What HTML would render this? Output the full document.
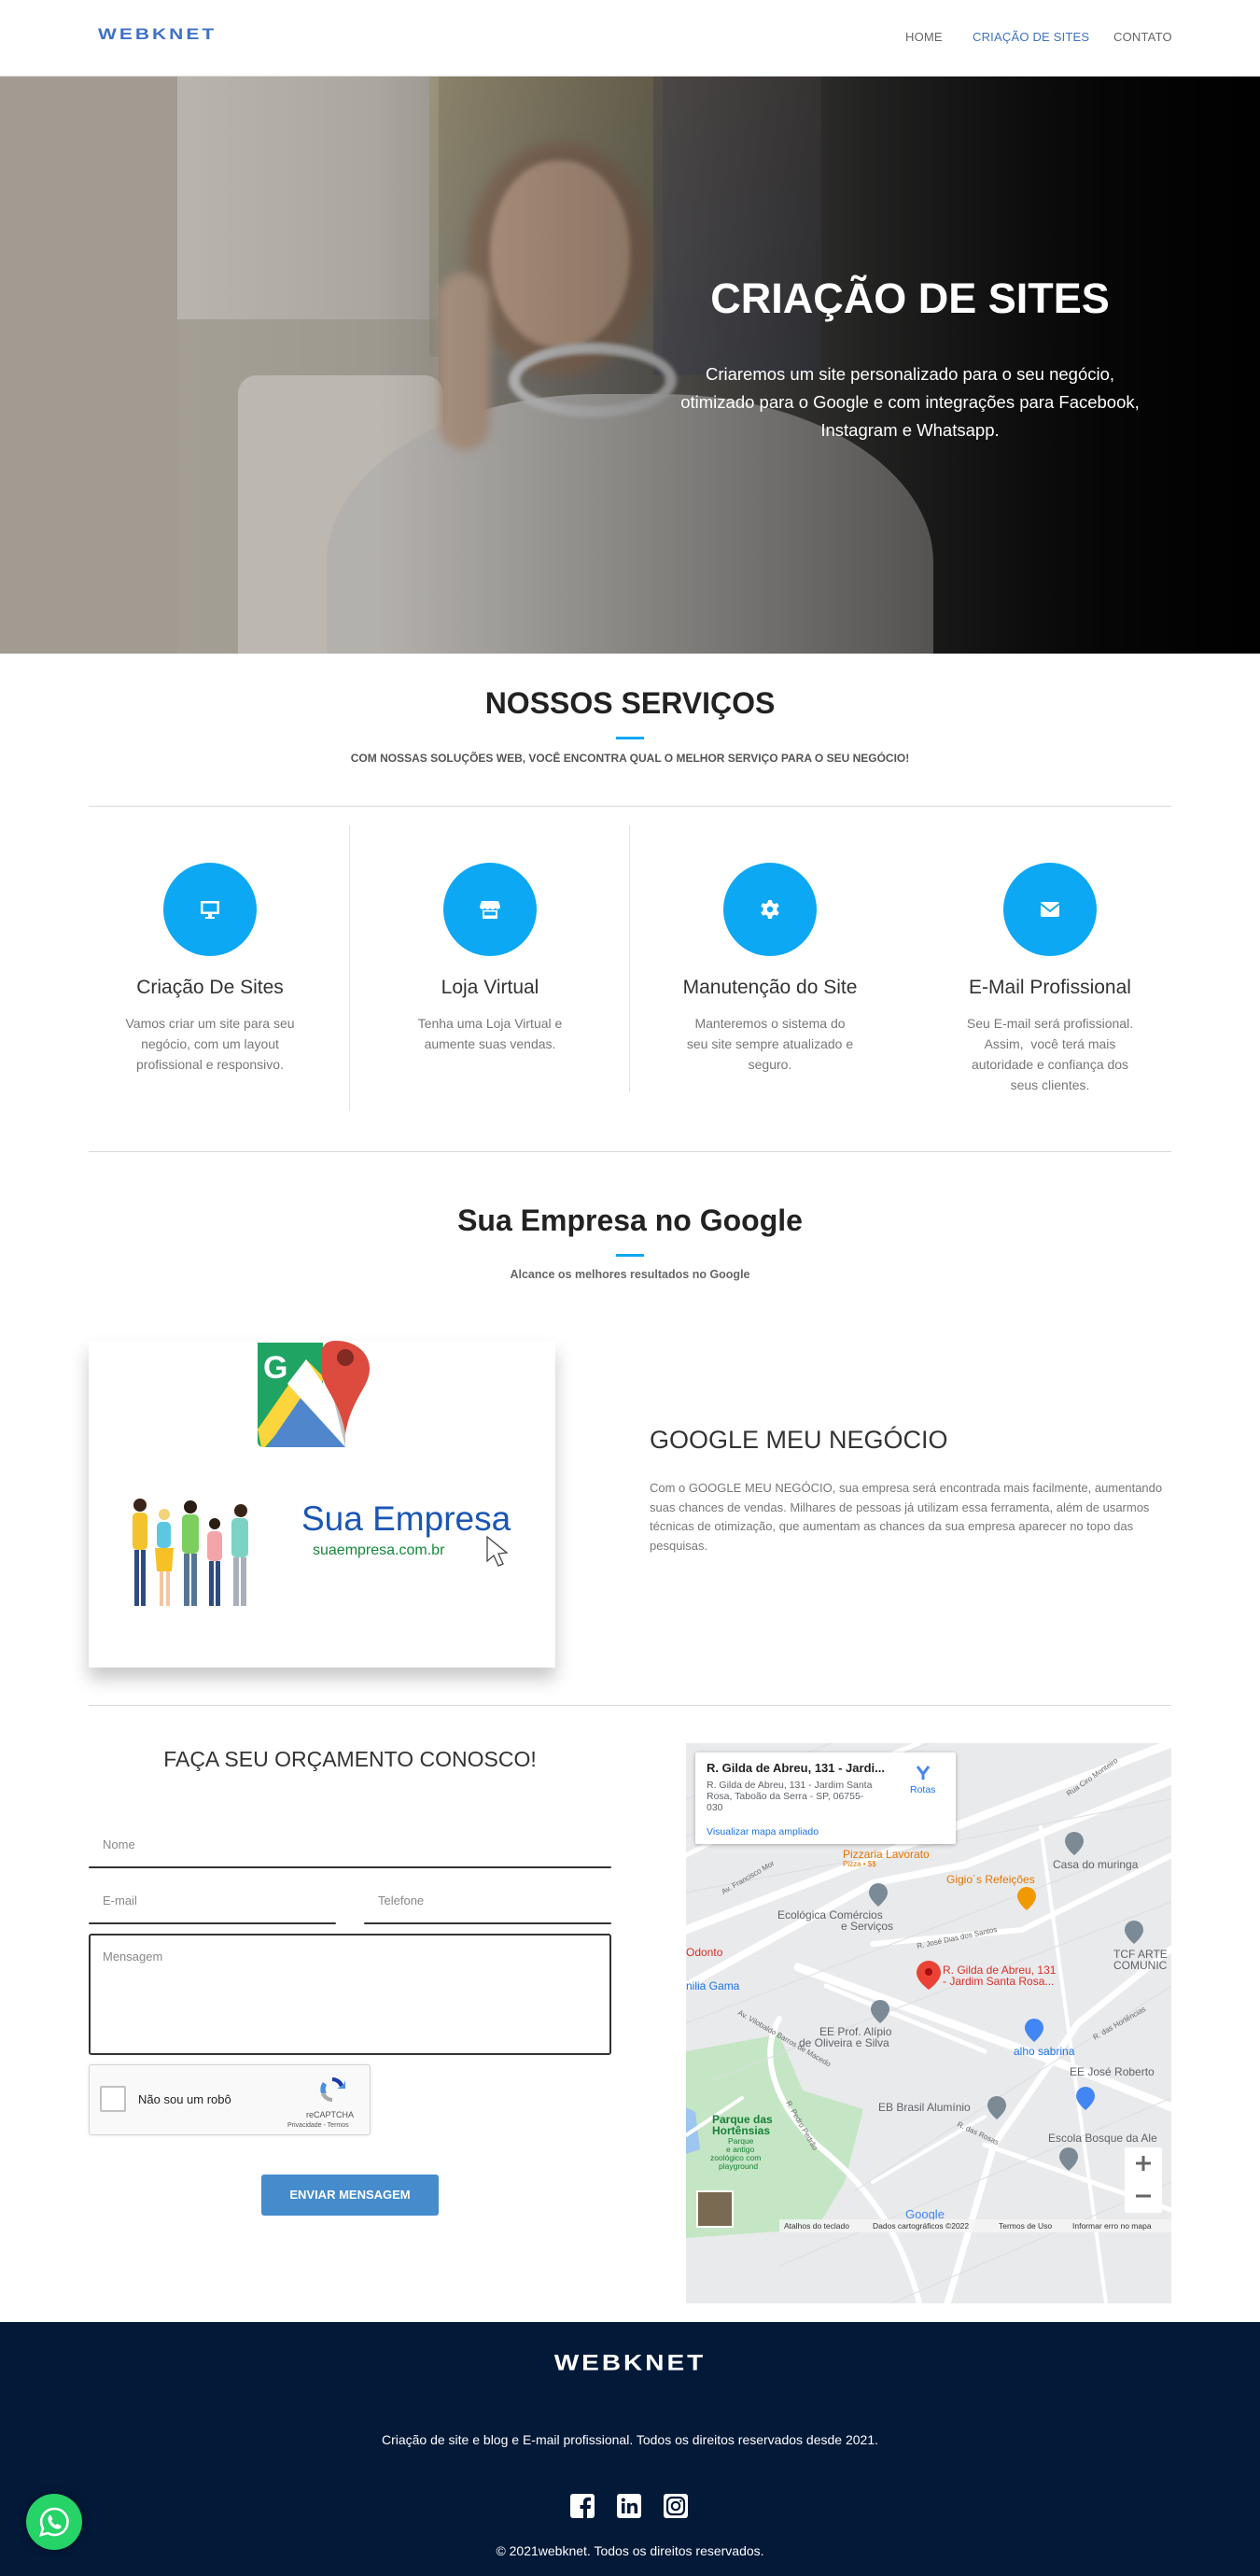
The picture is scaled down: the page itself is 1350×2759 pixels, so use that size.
<!DOCTYPE html>
<html><head><meta charset="utf-8">
<style>
*{margin:0;padding:0;box-sizing:border-box}
body{width:1350px;height:2759px;font-family:"Liberation Sans",sans-serif;background:#fff;position:relative;overflow:hidden;color:#666}
.abs{position:absolute}
.c{text-align:center}
.hr{position:absolute;left:95px;width:1160px;height:1px;background:#d9d9d9}
.nav a{position:absolute;top:32px;font-size:13px;color:#666;text-decoration:none;letter-spacing:.2px}
.circle{position:absolute;width:100px;height:100px;border-radius:50%;background:#0ca8f3;top:924px}
.circle svg{position:absolute;left:38px;top:38px}
.st{position:absolute;top:1046px;width:260px;text-align:center;font-size:21px;color:#333}
.sd{position:absolute;top:1085px;width:220px;text-align:center;font-size:14px;line-height:22px;color:#777}
.fld{position:absolute;font-size:13px;color:#888}
.line{position:absolute;height:2px;background:#333;border-radius:2px}
</style></head><body>

<!-- header -->
<div class="abs" style="left:0;top:0;width:1350px;height:82px;background:#fff;border-bottom:1px solid #ddd"></div>
<div class="abs" style="left:105px;top:25px;font-size:21px;font-weight:900;letter-spacing:3px;color:#3f72c4;transform:scaleY(.8)">WEBKNET</div>
<div class="nav">
<a style="left:970px">HOME</a>
<a style="left:1042px;color:#3f72c4">CRIAÇÃO DE SITES</a>
<a style="left:1193px">CONTATO</a>
</div>

<!-- hero -->
<div class="abs" style="left:0;top:82px;width:1350px;height:618px;overflow:hidden;background:linear-gradient(90deg,#9b958c 0%,#a59f95 15%,#8e8980 35%,#6a6762 55%,#3c3c3b 72%,#151515 88%,#050505 100%)">
  <div class="abs" style="left:0;top:0;width:190px;height:618px;background:#aaa39a"></div>
  <div class="abs" style="left:190px;top:0;width:280px;height:260px;background:linear-gradient(90deg,#cfcbc4,#bdb8b0);opacity:.7"></div>
  <div class="abs" style="left:190px;top:260px;width:280px;height:358px;background:#b3ada4;opacity:.6"></div>
  <div class="abs" style="left:460px;top:0;width:250px;height:300px;background:linear-gradient(180deg,#a79a6a,#8c8a7a);opacity:.5"></div>
  <div class="abs" style="left:700px;top:0;width:180px;height:320px;background:linear-gradient(180deg,#6b6464,#55596a);opacity:.6"></div>
  <div class="abs" style="left:255px;top:320px;width:220px;height:300px;border-radius:20px 20px 0 0;background:#c6c1ba"></div>
  <div class="abs" style="left:350px;top:340px;width:650px;height:400px;border-radius:45% 45% 0 0;background:#bdbab6"></div>
  <div class="abs" style="left:500px;top:70px;width:200px;height:250px;border-radius:50%;background:#8e7460;filter:blur(6px)"></div>
  <div class="abs" style="left:525px;top:90px;width:150px;height:200px;border-radius:48%;background:#c2a38c;filter:blur(3px)"></div>
  <div class="abs" style="left:545px;top:285px;width:180px;height:80px;border-radius:50%;border:12px solid #d0d0d0;filter:blur(2px)"></div>
  <div class="abs" style="left:470px;top:210px;width:55px;height:190px;border-radius:28px;background:#b89e8b;filter:blur(5px)"></div>
  <div class="abs" style="left:0;top:0;width:1350px;height:618px;background:linear-gradient(90deg,rgba(0,0,0,.05) 30%,rgba(0,0,0,.45) 65%,rgba(0,0,0,.85) 100%)"></div>
  <div class="abs c" style="left:675px;top:212px;width:600px;font-size:45px;font-weight:bold;color:#fff">CRIAÇÃO DE SITES</div>
  <div class="abs c" style="left:715px;top:304px;width:520px;font-size:18.5px;line-height:30px;color:#fff">Criaremos um site personalizado para o seu negócio, otimizado para o Google e com integrações para Facebook, Instagram e Whatsapp.</div>
</div>

<!-- services -->
<div class="abs c" style="left:0;top:735px;width:1350px;font-size:32px;font-weight:bold;color:#222">NOSSOS SERVIÇOS</div>
<div class="abs" style="left:660px;top:789px;width:30px;height:3px;background:#0ca8f3"></div>
<div class="abs c" style="left:0;top:805px;width:1350px;font-size:12px;font-weight:bold;color:#555">COM NOSSAS SOLUÇÕES WEB, VOCÊ ENCONTRA QUAL O MELHOR SERVIÇO PARA O SEU NEGÓCIO!</div>
<div class="hr" style="top:863px"></div>
<div class="abs" style="left:374px;top:884px;width:1px;height:306px;background:#e4e4e4"></div>
<div class="abs" style="left:674px;top:884px;width:1px;height:286px;background:#e4e4e4"></div>

<div class="circle" style="left:175px"><svg width="24" height="24" viewBox="0 0 24 24"><rect x="2" y="3" width="20" height="14" rx="1" fill="#fff"/><rect x="4.5" y="5.5" width="15" height="9" fill="#0ca8f3"/><rect x="10" y="17" width="4" height="3" fill="#fff"/><rect x="7" y="20" width="10" height="2" fill="#fff"/></svg></div>
<div class="circle" style="left:475px"><svg width="24" height="24" viewBox="0 0 24 24"><path d="M3 3h18l2 6a3 3 0 0 1-5.5 1.5A3 3 0 0 1 12 10.5 3 3 0 0 1 6.5 10.5 3 3 0 0 1 1 9z" fill="#fff"/><path d="M4 13h16v9H4z" fill="#fff"/><rect x="6" y="14.5" width="12" height="4" fill="#0ca8f3"/></svg></div>
<div class="circle" style="left:775px"><svg width="24" height="24" viewBox="0 0 24 24"><path d="M10 2h4l.6 3 2.3 1.3 2.8-1.2 2 3.4-2.3 2v2.9l2.3 2-2 3.4-2.8-1.2-2.3 1.3-.6 3.1h-4l-.6-3.1-2.3-1.3-2.8 1.2-2-3.4 2.3-2v-2.9l-2.3-2 2-3.4 2.8 1.2L9.4 5z" fill="#fff"/><circle cx="12" cy="12" r="3.2" fill="#0ca8f3"/></svg></div>
<div class="circle" style="left:1075px"><svg width="24" height="24" viewBox="0 0 24 24"><rect x="2" y="4" width="20" height="16" rx="2" fill="#fff"/><path d="M2 6l10 8 10-8" fill="none" stroke="#0ca8f3" stroke-width="2"/></svg></div>

<div class="st" style="left:95px">Criação De Sites</div>
<div class="st" style="left:395px">Loja Virtual</div>
<div class="st" style="left:695px">Manutenção do Site</div>
<div class="st" style="left:995px">E-Mail Profissional</div>
<div class="sd" style="left:115px">Vamos criar um site para seu negócio, com um layout profissional e responsivo.</div>
<div class="sd" style="left:415px;padding:0 20px">Tenha uma Loja Virtual e aumente suas vendas.</div>
<div class="sd" style="left:715px;padding:0 18px">Manteremos o sistema do seu site sempre atualizado e seguro.</div>
<div class="sd" style="left:1015px;padding:0 10px">Seu E-mail será profissional. Assim,&nbsp; você terá mais autoridade e confiança dos seus clientes.</div>

<div class="hr" style="top:1233px"></div>
<div class="abs c" style="left:0;top:1289px;width:1350px;font-size:32px;font-weight:bold;color:#222">Sua Empresa no Google</div>
<div class="abs" style="left:660px;top:1343px;width:30px;height:3px;background:#0ca8f3"></div>
<div class="abs c" style="left:0;top:1358px;width:1350px;font-size:12.5px;font-weight:bold;color:#666">Alcance os melhores resultados no Google</div>

<!-- google card -->
<div class="abs" style="left:95px;top:1436px;width:500px;height:350px;background:#fff;box-shadow:0 12px 18px rgba(0,0,0,.22)">
  <svg class="abs" style="left:177px;top:0" width="126" height="116" viewBox="0 0 126 116">
    <path d="M4 2h70v112H10a6 6 0 0 1-6-6z" fill="#1fa463"/>
    <path d="M4 95L56 20l20 20L12 114H8z" fill="#fcd43c"/>
    <path d="M14 114L58 50l40 64z" fill="#4f86cc"/>
    <path d="M56 20l42 60V114L36 46z" fill="#fff"/>
    <path d="M80 40l18 30v44z" fill="#c1c1c1"/>
    <path d="M88 0c22 0 36 14 36 30 0 20-20 32-26 70-6-38-26-50-26-70C72 14 70 0 88 0z" fill="#dc4b3e"/>
    <circle cx="98" cy="18" r="9" fill="#812b24"/>
    <text x="10" y="40" font-family="Liberation Sans" font-weight="bold" font-size="34" fill="#fff">G</text>
  </svg>
  <svg class="abs" style="left:43px;top:168px" width="155" height="125" viewBox="0 0 155 125">
    <g><circle cx="12" cy="8" r="7" fill="#3a2418"/><rect x="4" y="16" width="16" height="40" rx="5" fill="#f3c22e"/><rect x="6" y="56" width="5" height="60" fill="#2e4b7e"/><rect x="13" y="56" width="5" height="60" fill="#2e4b7e"/></g>
    <g><circle cx="38" cy="18" r="6" fill="#f1d37a"/><rect x="30" y="26" width="15" height="28" rx="5" fill="#5cc7e0"/><path d="M28 54h20l-2 25H30z" fill="#f6c125"/><rect x="33" y="79" width="4" height="37" fill="#f2c6a6"/><rect x="40" y="79" width="4" height="37" fill="#f2c6a6"/></g>
    <g><circle cx="66" cy="10" r="7" fill="#2b1c14"/><rect x="57" y="18" width="18" height="42" rx="5" fill="#7ccf5e"/><rect x="59" y="60" width="6" height="56" fill="#567594"/><rect x="67" y="60" width="6" height="56" fill="#567594"/></g>
    <g><circle cx="92" cy="28" r="6" fill="#2b1c14"/><rect x="84" y="36" width="16" height="32" rx="5" fill="#f3a5a7"/><rect x="86" y="68" width="5" height="48" fill="#2e4b7e"/><rect x="93" y="68" width="5" height="48" fill="#2e4b7e"/></g>
    <g><circle cx="120" cy="14" r="7" fill="#3a2418"/><rect x="110" y="22" width="18" height="42" rx="5" fill="#7dd3c3"/><rect x="112" y="64" width="6" height="52" fill="#a9b0bb"/><rect x="120" y="64" width="6" height="52" fill="#a9b0bb"/></g>
  </svg>
  <div class="abs" style="left:228px;top:170px;font-size:37px;color:#1a56b4">Sua Empresa</div>
  <div class="abs" style="left:240px;top:216px;font-size:16px;color:#15893a">suaempresa.com.br</div>
  <svg class="abs" style="left:425px;top:208px" width="30" height="36" viewBox="0 0 30 36"><path d="M2 2l0 26 7-6 5 11 5-2-5-11 9-1z" fill="#fff" stroke="#444" stroke-width="1.3"/></svg>
</div>

<div class="abs" style="left:696px;top:1527px;font-size:27px;color:#333;font-weight:300">GOOGLE MEU NEGÓCIO</div>
<div class="abs" style="left:696px;top:1584px;width:550px;font-size:13px;line-height:20.5px;color:#777">Com o GOOGLE MEU NEGÓCIO, sua empresa será encontrada mais facilmente, aumentando suas chances de vendas. Milhares de pessoas já utilizam essa ferramenta, além de usarmos técnicas de otimização, que aumentam as chances da sua empresa aparecer no topo das pesquisas.</div>

<div class="hr" style="top:1826px"></div>

<!-- form -->
<div class="abs c" style="left:95px;top:1871px;width:560px;font-size:23px;color:#333">FAÇA SEU ORÇAMENTO CONOSCO!</div>
<div class="fld" style="left:110px;top:1968px">Nome</div>
<div class="line" style="left:95px;top:1999px;width:560px"></div>
<div class="fld" style="left:110px;top:2028px">E-mail</div>
<div class="line" style="left:95px;top:2059px;width:265px"></div>
<div class="fld" style="left:405px;top:2028px">Telefone</div>
<div class="line" style="left:390px;top:2059px;width:265px"></div>
<div class="abs" style="left:95px;top:2071px;width:560px;height:130px;border:2px solid #333;border-radius:3px"></div>
<div class="fld" style="left:110px;top:2088px">Mensagem</div>
<div class="abs" style="left:95px;top:2211px;width:302px;height:76px;background:#f9f9f9;border:1px solid #d3d3d3;border-radius:3px;box-shadow:0 0 4px rgba(0,0,0,.08)"></div>
<div class="abs" style="left:107px;top:2234px;width:28px;height:28px;background:#fff;border:2px solid #c1c1c1;border-radius:2px"></div>
<div class="abs" style="left:148px;top:2241px;font-size:13px;color:#222">Não sou um robô</div>
<svg class="abs" style="left:340px;top:2222px" width="32" height="32" viewBox="0 0 32 32"><path d="M16 3a13 13 0 0 1 12 8l-4 2A9 9 0 0 0 16 7z" fill="#1c3aa9"/><path d="M28 11l2-5v9h-9z" fill="#4a90e2"/><path d="M4 20a13 13 0 0 1 2-12l4 3a9 9 0 0 0 0 9z" fill="#4a90e2"/><path d="M16 29A13 13 0 0 1 4 21l4-2a9 9 0 0 0 8 6z" fill="#aaa"/></svg>
<div class="abs" style="left:328px;top:2260px;font-size:9px;color:#555">reCAPTCHA</div>
<div class="abs" style="left:308px;top:2273px;font-size:7px;color:#555">Privacidade - Termos</div>
<div class="abs c" style="left:280px;top:2329px;width:190px;height:44px;line-height:44px;background:#458ccd;border-radius:3px;color:#fff;font-size:13px;font-weight:bold">ENVIAR MENSAGEM</div>

<!-- map -->
<div class="abs" style="left:735px;top:1867px;width:520px;height:600px;overflow:hidden;background:#e9eaec">
<svg width="520" height="600" viewBox="0 0 520 600" font-family="Liberation Sans">
  <path d="M0 330L100 312 125 372 190 392 170 470 140 520 0 530z" fill="#c4e6c4"/>
  <path d="M0 390l10 5 5 40-15 5z" fill="#9dc6f0"/>
  <g stroke="#fff" fill="none" stroke-linecap="round">
    <path d="M0 200L520 0" stroke-width="9"/>
    <path d="M0 260L200 150 300 130 520 40" stroke-width="8"/>
    <path d="M120 240L420 350 520 390" stroke-width="9"/>
    <path d="M0 120L200 20 250 0" stroke-width="5"/>
    <path d="M200 215L360 200 520 120" stroke-width="6"/>
    <path d="M100 295C80 330 90 380 140 430 190 470 230 520 250 600" stroke-width="6"/>
    <path d="M280 600L330 430 420 300 520 220" stroke-width="7"/>
    <path d="M320 430L520 500" stroke-width="5"/>
    <path d="M150 260L320 330" stroke-width="5"/>
    <path d="M380 90L450 600" stroke-width="4"/>
    <path d="M0 420L60 380" stroke-width="4"/>
    <path d="M200 470L320 400" stroke-width="4"/>
  </g>
  <g stroke="#dcdde0" stroke-width="1" fill="none">
    <path d="M0 60L520 -140M0 100L520 -100M0 160L520 60M0 300L520 100M30 360L520 170M180 480L520 260M100 560L520 380M220 600L520 470"/>
  </g>
  <rect x="10" y="10" width="279" height="98" fill="#fff" rx="2" style="filter:drop-shadow(0 1px 2px rgba(0,0,0,.3))"/>
  <text x="22" y="31" font-size="13" font-weight="bold" fill="#222">R. Gilda de Abreu, 131 - Jardi...</text>
  <text x="22" y="48" font-size="10.5" fill="#5f6368">R. Gilda de Abreu, 131 - Jardim Santa</text>
  <text x="22" y="60" font-size="10.5" fill="#5f6368">Rosa, Taboão da Serra - SP, 06755-</text>
  <text x="22" y="72" font-size="10.5" fill="#5f6368">030</text>
  <text x="22" y="98" font-size="10.5" fill="#1a73e8">Visualizar mapa ampliado</text>
  <path d="M248 25l6 8 6-8M254 33v6" stroke="#4285f4" stroke-width="3" fill="none"/>
  <text x="240" y="53" font-size="10.5" fill="#1a73e8">Rotas</text>
  <text x="168" y="123" font-size="12" fill="#e37400">Pizzaria Lavorato</text>
  <text x="168" y="132" font-size="8" fill="#e37400">Pizza • $$</text>
  <text x="393" y="134" font-size="12" fill="#5f6368">Casa do muringa</text>
  <text x="279" y="150" font-size="12" fill="#e37400">Gigio´s Refeições</text>
  <text x="98" y="188" font-size="12" fill="#5f6368">Ecológica Comércios</text>
  <text x="166" y="200" font-size="12" fill="#5f6368">e Serviços</text>
  <text x="0" y="228" font-size="12" fill="#d93025">Odonto</text>
  <text x="0" y="264" font-size="12" fill="#1a73e8">nilia Gama</text>
  <text x="275" y="247" font-size="12" fill="#d93025">R. Gilda de Abreu, 131</text>
  <text x="275" y="259" font-size="12" fill="#d93025">- Jardim Santa Rosa...</text>
  <text x="458" y="230" font-size="12" fill="#5f6368">TCF ARTE</text>
  <text x="458" y="242" font-size="12" fill="#5f6368">COMUNIC</text>
  <text x="143" y="313" font-size="12" fill="#5f6368">EE Prof. Alípio</text>
  <text x="121" y="325" font-size="12" fill="#5f6368">de Oliveira e Silva</text>
  <text x="351" y="334" font-size="12" fill="#1a73e8">alho sabrina</text>
  <text x="411" y="356" font-size="12" fill="#5f6368">EE José Roberto</text>
  <text x="206" y="394" font-size="12" fill="#5f6368">EB Brasil Alumínio</text>
  <text x="388" y="427" font-size="12" fill="#5f6368">Escola Bosque da Ale</text>
  <text x="28" y="407" font-size="12" font-weight="bold" fill="#188038">Parque das</text>
  <text x="28" y="419" font-size="12" font-weight="bold" fill="#188038">Hortênsias</text>
  <text x="45" y="429" font-size="8.5" fill="#188038">Parque</text>
  <text x="43" y="438" font-size="8.5" fill="#188038">e antigo</text>
  <text x="26" y="447" font-size="8.5" fill="#188038">zoológico com</text>
  <text x="35" y="456" font-size="8.5" fill="#188038">playground</text>
  <text x="248" y="220" font-size="8" fill="#666" transform="rotate(-12 248 220)">R. José Dias dos Santos</text>
  <text x="410" y="57" font-size="8" fill="#666" transform="rotate(-35 410 57)">Rua Ciro Monteiro</text>
  <text x="40" y="162" font-size="8" fill="#666" transform="rotate(-30 40 162)">Av. Francisco Mor</text>
  <text x="55" y="290" font-size="8" fill="#666" transform="rotate(30 55 290)">Av. Vilobaldo Barros de Macedo</text>
  <text x="107" y="385" font-size="8" fill="#666" transform="rotate(60 107 385)">R. Pedro Pedrão</text>
  <text x="438" y="318" font-size="8" fill="#666" transform="rotate(-30 438 318)">R. das Hortências</text>
  <text x="290" y="410" font-size="8" fill="#666" transform="rotate(25 290 410)">R. das Rosas</text>
  <g fill="#7b8a95"><path d="M416 95a10 10 0 0 1 10 10c0 7-10 15-10 15s-10-8-10-15a10 10 0 0 1 10-10z"/><path d="M206 150a10 10 0 0 1 10 10c0 7-10 15-10 15s-10-8-10-15a10 10 0 0 1 10-10z"/><path d="M480 190a10 10 0 0 1 10 10c0 7-10 15-10 15s-10-8-10-15a10 10 0 0 1 10-10z"/><path d="M208 275a10 10 0 0 1 10 10c0 7-10 15-10 15s-10-8-10-15a10 10 0 0 1 10-10z"/><path d="M333 378a10 10 0 0 1 10 10c0 7-10 15-10 15s-10-8-10-15a10 10 0 0 1 10-10z"/><path d="M410 433a10 10 0 0 1 10 10c0 7-10 15-10 15s-10-8-10-15a10 10 0 0 1 10-10z"/></g>
  <path d="M365 154a10 10 0 0 1 10 10c0 7-10 15-10 15s-10-8-10-15a10 10 0 0 1 10-10z" fill="#f29900"/>
  <g fill="#4285f4"><path d="M373 295a10 10 0 0 1 10 10c0 7-10 15-10 15s-10-8-10-15a10 10 0 0 1 10-10z"/><path d="M428 368a10 10 0 0 1 10 10c0 7-10 15-10 15s-10-8-10-15a10 10 0 0 1 10-10z"/></g>
  <path d="M260 233a13 13 0 0 1 13 13c0 9-13 18-13 18s-13-9-13-18a13 13 0 0 1 13-13z" fill="#ea4335"/>
  <circle cx="260" cy="245" r="4" fill="#a50e0e"/>
  <rect x="470" y="433" width="40" height="70" fill="#fff" rx="2"/>
  <path d="M482 450h16M490 442v16M482 485h16" stroke="#666" stroke-width="3"/>
  <rect x="12" y="480" width="38" height="38" fill="#7a6a52" stroke="#fff" stroke-width="2"/>
  <text x="235" y="509" font-size="13" fill="#4285f4">Google</text>
  <rect x="100" y="510" width="420" height="14" fill="rgba(245,245,245,.85)"/>
  <text x="105" y="520" font-size="8.5" fill="#333">Atalhos do teclado</text>
  <text x="200" y="520" font-size="8.5" fill="#333">Dados cartográficos ©2022</text>
  <text x="335" y="520" font-size="8.5" fill="#333">Termos de Uso</text>
  <text x="414" y="520" font-size="8.5" fill="#333">Informar erro no mapa</text>
</svg>
</div>

<!-- footer -->
<div class="abs" style="left:0;top:2487px;width:1350px;height:272px;background:#031938"></div>
<div class="abs c" style="left:0;top:2515px;width:1350px;font-size:28px;font-weight:900;letter-spacing:3px;color:#fff;transform:scaleY(.85)">WEBKNET</div>
<div class="abs c" style="left:0;top:2605px;width:1350px;font-size:14px;color:#fff">Criação de site e blog e E-mail profissional. Todos os direitos reservados desde 2021.</div>
<svg class="abs" style="left:611px;top:2671px" width="26" height="26" viewBox="0 0 26 26"><rect width="26" height="26" rx="3" fill="#fff"/><path d="M18 26V16h3.5l.5-4h-4V9.5c0-1.2.4-2 2-2h2V4c-.4 0-1.6-.2-3-.2-3 0-5 1.8-5 5.2v3h-3.5v4H14v10z" fill="#031938"/></svg>
<svg class="abs" style="left:661px;top:2671px" width="26" height="26" viewBox="0 0 26 26"><rect width="26" height="26" rx="3" fill="#fff"/><rect x="5" y="10" width="3.5" height="11" fill="#031938"/><circle cx="6.8" cy="6.5" r="2.1" fill="#031938"/><path d="M11 10h3.3v1.6c.6-1 1.9-1.9 3.8-1.9 3.4 0 4 2.2 4 5.1V21h-3.5v-5.5c0-1.4 0-3-1.900-3s-2.2 1.4-2.2 2.9V21H11z" fill="#031938"/></svg>
<svg class="abs" style="left:711px;top:2671px" width="26" height="26" viewBox="0 0 26 26"><rect width="26" height="26" rx="3" fill="#fff"/><rect x="4" y="4" width="18" height="18" rx="5" fill="none" stroke="#031938" stroke-width="2.2"/><circle cx="13" cy="13" r="4.2" fill="none" stroke="#031938" stroke-width="2.2"/><circle cx="18.3" cy="7.7" r="1.2" fill="#031938"/></svg>
<div class="abs c" style="left:0;top:2724px;width:1350px;font-size:14px;color:#fff">© 2021webknet. Todos os direitos reservados.</div>
<div class="abs" style="left:28px;top:2671px;width:60px;height:60px;border-radius:50%;background:#25d366;box-shadow:0 0 10px rgba(0,0,0,.3)"></div>
<svg class="abs" style="left:40px;top:2683px" width="36" height="36" viewBox="0 0 36 36"><path d="M18 4a14 14 0 0 0-12 21L4 32l7.3-2A14 14 0 1 0 18 4z" fill="none" stroke="#fff" stroke-width="2.6"/><path d="M13 11c.6-.3 1.4-.2 1.7.4l1.5 3.3c.2.5 0 1-.4 1.4l-.8.8c.9 2 2.6 3.7 4.6 4.6l.8-.8c.4-.4 1-.5 1.4-.3l3.2 1.5c.6.3.8 1 .5 1.6-.7 1.6-2.3 2.5-4 2.2-5-1-9-5-10-10-.3-1.7.4-3.4 1.5-4.7z" fill="#fff"/></svg>
</body></html>
